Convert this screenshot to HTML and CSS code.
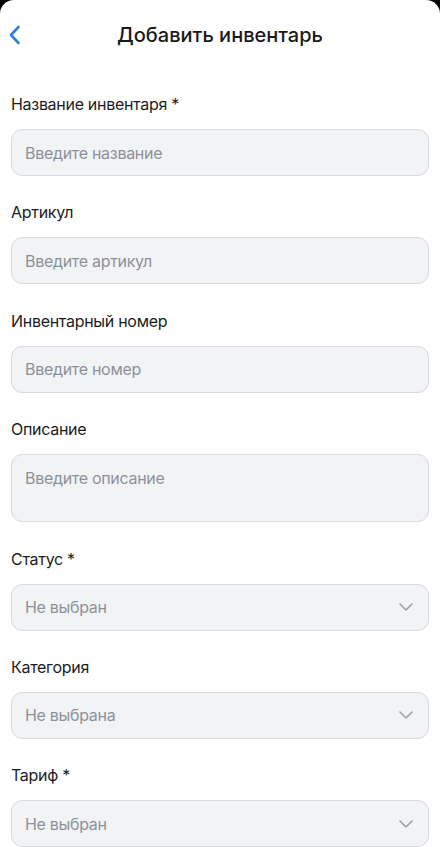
FILE: index.html
```html
<!DOCTYPE html>
<html lang="ru">
<head>
    <meta charset="UTF-8">
    <meta name="viewport" content="width=device-width, initial-scale=1.0">
    <title>Добавить инвентарь</title>
    <link rel="stylesheet" href="styles.css">
</head>
<body>
    <div class="sheet">
        <header class="header">
            <button class="back" type="button" aria-label="Назад">
                <svg width="14" height="20" viewBox="0 0 14 20">
                    <path d="M10.5 2 L3 10 L10.5 18" fill="none" stroke="#2f7fe0" stroke-width="2.6" stroke-linecap="round" stroke-linejoin="round"/>
                </svg>
            </button>
            <h1>Добавить инвентарь</h1>
        </header>

        <form class="form">
            <div class="form-group">
                <label for="name">Название инвентаря *</label>
                <input type="text" id="name" placeholder="Введите название">
            </div>

            <div class="form-group">
                <label for="sku">Артикул</label>
                <input type="text" id="sku" placeholder="Введите артикул">
            </div>

            <div class="form-group">
                <label for="number">Инвентарный номер</label>
                <input type="text" id="number" placeholder="Введите номер">
            </div>

            <div class="form-group">
                <label for="description">Описание</label>
                <textarea id="description" placeholder="Введите описание"></textarea>
            </div>

            <div class="form-group">
                <label>Статус *</label>
                <div class="select">
                    <span>Не выбран</span>
                    <svg width="14" height="8" viewBox="0 0 14 8"><path d="M1 1 L7 7 L13 1" fill="none" stroke="#9ba0a8" stroke-width="1.6" stroke-linecap="round" stroke-linejoin="round"/></svg>
                </div>
            </div>

            <div class="form-group">
                <label>Категория</label>
                <div class="select">
                    <span>Не выбрана</span>
                    <svg width="14" height="8" viewBox="0 0 14 8"><path d="M1 1 L7 7 L13 1" fill="none" stroke="#9ba0a8" stroke-width="1.6" stroke-linecap="round" stroke-linejoin="round"/></svg>
                </div>
            </div>

            <div class="form-group">
                <label>Тариф *</label>
                <div class="select">
                    <span>Не выбран</span>
                    <svg width="14" height="8" viewBox="0 0 14 8"><path d="M1 1 L7 7 L13 1" fill="none" stroke="#9ba0a8" stroke-width="1.6" stroke-linecap="round" stroke-linejoin="round"/></svg>
                </div>
            </div>
        </form>
    </div>
</body>
</html>
```

FILE: styles.css
```css
html, body {
    margin: 0;
    padding: 0;
    background: #000;
}
body {
    font-family: Inter, "Noto Sans", Arial, sans-serif;
    color: #1c1c1e;
}
.sheet {
    background: #fff;
    border-radius: 14px 14px 0 0;
    min-height: 847px;
    overflow: hidden;
}
.header {
    height: 70px;
    display: flex;
    align-items: center;
    justify-content: center;
    position: relative;
}
.header h1 {
    margin: 0;
    font-size: 20px;
    font-weight: 500;
    color: #1a1a1a;
}
.back {
    position: absolute;
    left: 8px;
    top: 25px;
    background: none;
    border: none;
    padding: 0;
    width: 16px;
    height: 20px;
    display: flex;
}
.form {
    padding: 24px 11px 0;
}
.form-group {
    margin-bottom: 26.4px;
}
label {
    display: block;
    font-size: 16px;
    line-height: 20px;
    letter-spacing: -0.3px;
    margin-bottom: 15px;
    color: #1c1c1e;
}
input, textarea, .select {
    width: 100%;
    box-sizing: border-box;
    height: 47px;
    padding: 0 13px;
    border: 1px solid #d8dadf;
    border-radius: 11px;
    background: #f2f3f5;
    font-family: inherit;
    font-size: 16px;
    letter-spacing: -0.3px;
    color: #1c1c1e;
    outline: none;
}
input::placeholder, textarea::placeholder {
    color: #8d929a;
}
textarea {
    height: 68px;
    padding-top: 13px;
    resize: none;
    display: block;
}
.select {
    display: flex;
    align-items: center;
    justify-content: space-between;
    padding-right: 15px;
    color: #8d929a;
}
```
